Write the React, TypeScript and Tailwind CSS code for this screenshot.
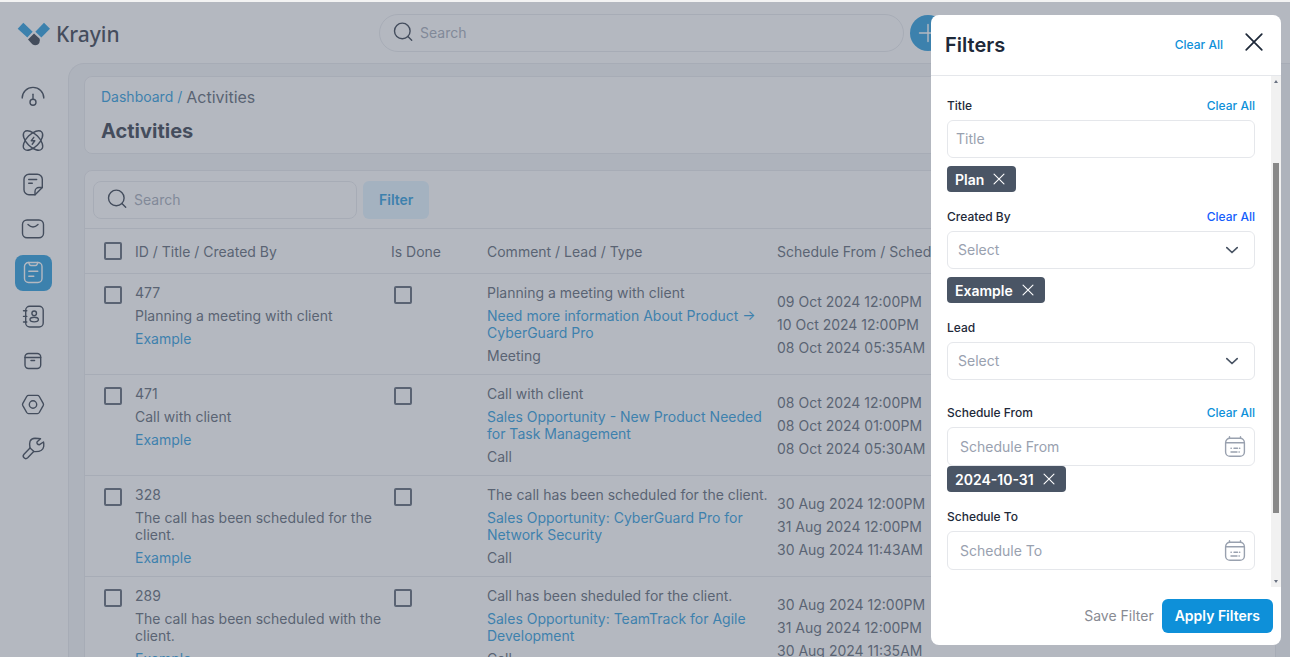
import React from "react";

const brandText = "text-[#0e90d9]";

type IconProps = { children: React.ReactNode; className?: string };

function Icon({ children, className = "size-6" }: IconProps) {
  return (
    <svg
      viewBox="0 0 24 24"
      fill="none"
      stroke="currentColor"
      strokeWidth="1.4"
      strokeLinecap="round"
      strokeLinejoin="round"
      aria-hidden="true"
      className={`shrink-0 ${className}`}
    >
      {children}
    </svg>
  );
}

function SearchIcon() {
  return (
    <Icon className="size-6">
      <circle cx="11.3" cy="9.9" r="7.8" />
      <path d="M16.900 15.500l3.800 3.800" />
    </Icon>
  );
}

function CloseIcon({ className }: { className: string }) {
  return (
    <Icon className={className}>
      <path d="M3.5 3.5l17 17M20.5 3.5l-17 17" strokeWidth="1.9" />
    </Icon>
  );
}

function CalendarIcon() {
  return (
    <Icon className="size-6">
      <path d="M7 3.300h10a4.400 4.400 0 0 1 4.400 4.400v9.200a4.400 4.400 0 0 1-4.400 4.400H7a4.400 4.400 0 0 1-4.400-4.400V7.700A4.400 4.400 0 0 1 7 3.300z" />
      <path d="M2.700 7.800h18.600M6.500 1.700v1.500M17.500 1.700v1.500M8 13.200h.3M11 13.200h3.500M16.500 13.200h.3M8 17h6M16 17h.3" />
    </Icon>
  );
}

const navItems = [
  {
    label: "Dashboard",
    icon: (
      <>
        <path d="M1.200 13C1.200 7 6 2.400 12 2.400S22.800 7 22.800 13" />
        <path d="M12 9.200v5" />
        <circle cx="12" cy="17.300" r="3" />
      </>
    ),
  },
  {
    label: "Leads",
    icon: (
      <>
        <ellipse cx="12" cy="11.500" rx="12.200" ry="6.300" transform="rotate(45 12 11.500)" />
        <ellipse cx="12" cy="11.500" rx="12.200" ry="6.300" transform="rotate(-45 12 11.500)" />
        <path d="M12.800 8.300l-2.600 3.500h3.600l-2.600 3.400" />
      </>
    ),
  },
  {
    label: "Quotes",
    icon: (
      <>
        <path d="M8 1.200h8.300a5 5 0 0 1 5 5v8.300l-7.200 7.200H8a5 5 0 0 1-5-5V6.200a5 5 0 0 1 5-5z" />
        <path d="M21.300 14.500H18a4 4 0 0 0-4 4v3.200" />
        <path d="M7.700 6.500h8M7.700 10.200h3.600" />
      </>
    ),
  },
  {
    label: "Mail",
    icon: (
      <>
        <rect x="1.500" y="3" width="21" height="17.800" rx="4.500" />
        <path d="M7 7.500c3.500 3.400 6.500 3.400 10 0" />
      </>
    ),
  },
  {
    label: "Activities",
    icon: (
      <>
        <rect x="3.500" y="1.500" width="17.500" height="20" rx="4" />
        <path d="M7.800 1.500c.3 2.200 1 3 2.200 3h4.500c1.200 0 1.900-.8 2.200-3M7.800 10.300h9M7.800 15.300h5" />
      </>
    ),
  },
  {
    label: "Contacts",
    icon: (
      <>
        <rect x="4.700" y="1.300" width="17.500" height="20.700" rx="4" />
        <path d="M2.500 5.800h3.300M2.500 11.400h3.300M2.500 17h3.300" />
        <circle cx="13.200" cy="8.300" r="2.300" />
        <ellipse cx="13.200" cy="14.600" rx="4.200" ry="2.300" />
      </>
    ),
  },
  {
    label: "Products",
    icon: (
      <>
        <rect x="4" y="4.500" width="15.700" height="15" rx="3.500" />
        <path d="M4 8.500h15.700M10 11.500h3.600" />
      </>
    ),
  },
  {
    label: "Configuration",
    icon: (
      <>
        <path d="M1.700 10.700l4-7.200c.5-.8 1-1.100 1.800-1.100h9c.8 0 1.300.3 1.800 1.100l4 7.200c.3.600.3 1 0 1.600l-4 7.200c-.5.800-1 1.100-1.800 1.100h-9c-.8 0-1.300-.3-1.800-1.100l-4-7.200c-.3-.6-.3-1 0-1.600z" />
        <circle cx="12" cy="11.500" r="3.700" />
      </>
    ),
  },
  {
    label: "Settings",
    icon: (
      <>
        <path d="M9 11C8 5.500 8.500 1.500 14 1.200c2 0 4 0 5.500.5l-3.300 3c-.8 1.500.2 3 2.300 3l4-2.700c.5 1.500.3 3 .2 4.500-.6 4-3.700 5.500-9.700 5.100z" />
        <path d="M9 11l-6 6.200c-2.300 2.500 1.200 6 3.700 3.600l6-6.200" />
      </>
    ),
  },
];

type Activity = {
  id: string;
  title: string;
  comment: string;
  lead: string;
  type: string;
  dates: string[];
};

const activities: Activity[] = [
  {
    id: "477",
    title: "Planning a meeting with client",
    comment: "Planning a meeting with client",
    lead: "Need more information About Product -> CyberGuard Pro",
    type: "Meeting",
    dates: ["09 Oct 2024 12:00PM", "10 Oct 2024 12:00PM", "08 Oct 2024 05:35AM"],
  },
  {
    id: "471",
    title: "Call with client",
    comment: "Call with client",
    lead: "Sales Opportunity - New Product Needed for Task Management",
    type: "Call",
    dates: ["08 Oct 2024 12:00PM", "08 Oct 2024 01:00PM", "08 Oct 2024 05:30AM"],
  },
  {
    id: "328",
    title: "The call has been scheduled for the client.",
    comment: "The call has been scheduled for the client.",
    lead: "Sales Opportunity: CyberGuard Pro for Network Security",
    type: "Call",
    dates: ["30 Aug 2024 12:00PM", "31 Aug 2024 12:00PM", "30 Aug 2024 11:43AM"],
  },
  {
    id: "289",
    title: "The call has been scheduled with the client.",
    comment: "Call has been sheduled for the client.",
    lead: "Sales Opportunity: TeamTrack for Agile Development",
    type: "Call",
    dates: ["30 Aug 2024 12:00PM", "31 Aug 2024 12:00PM", "30 Aug 2024 11:35AM"],
  },
];

function Checkbox({ label }: { label: string }) {
  return (
    <input
      type="checkbox"
      aria-label={label}
      className="block size-[18px] appearance-none rounded-[2px] border-2 border-gray-600"
    />
  );
}

function Header() {
  return (
    <header className="flex h-[61px] shrink-0 items-center justify-between px-4">
      <a href="#home" className="flex w-[103px] items-center gap-[5px] pt-0.5 pl-px text-gray-800">
        <svg viewBox="51 67 102 71" className="h-6 w-[34px] shrink-0" aria-hidden="true">
          <path d="M53 87L70 69L98 96L82 113Z" fill="#0e90d9" />
          <path d="M106 96L132 69L150 87L124 113Z" fill="#0e90d9" />
          <path d="M84 119L102 101L119 117Q121 128 114 134Q105 139 97 133Z" fill="#1f2937" />
        </svg>
        <span className="font-['Noto_Sans',sans-serif] text-[21px] leading-7 font-medium">Krayin</span>
      </a>
      <div className="flex items-center gap-1.5">
        <div className="flex h-[38px] w-[525px] items-center gap-[5px] rounded-full border border-gray-200 px-[11px]">
          <SearchIcon />
          <input
            type="search"
            aria-label="Search everything"
            placeholder="Search"
            className="min-w-0 flex-1 outline-none placeholder:text-gray-400"
          />
        </div>
        <button type="button" aria-label="Create" className="grid size-9 place-items-center rounded-full bg-[#0e90d9] text-white">
          <Icon>
            <path d="M12 3.500v17M3.500 12h17" />
          </Icon>
        </button>
      </div>
      <div className="flex w-[68px] items-center justify-end">
        <button type="button" aria-label="Account" className="size-9 rounded-full bg-pink-400" />
      </div>
    </header>
  );
}

function Sidebar() {
  return (
    <nav aria-label="Main" className="flex w-[68px] shrink-0 flex-col gap-2 px-[15px] pt-4 text-gray-800">
      {navItems.map((item) => (
        <a
          key={item.label}
          href={`#${item.label.toLowerCase()}`}
          aria-label={item.label}
          className={
            item.label === "Activities"
              ? "flex h-9 w-[37px] items-center rounded-lg bg-[#0e90d9] pl-1.5 text-white"
              : "flex h-9 w-[37px] items-center rounded-lg pl-1.5"
          }
        >
          <Icon>{item.icon}</Icon>
        </a>
      ))}
    </nav>
  );
}

function ActivityTable() {
  return (
    <table className="w-full table-fixed text-left text-gray-600">
      <colgroup>
        <col className="w-[50px]" />
        <col className="w-[256px]" />
        <col className="w-[96px]" />
        <col className="w-[290px]" />
        <col />
      </colgroup>
      <thead>
        <tr className="h-11 border-b border-gray-200">
          <th className="pl-[19px] font-normal">
            <Checkbox label="Select all activities" />
          </th>
          <th className="pt-0.5 font-normal">ID / Title / Created By</th>
          <th className="pt-0.5 font-normal">Is Done</th>
          <th className="pt-0.5 font-normal">Comment / Lead / Type</th>
          <th className="pt-0.5 font-normal">Schedule From / Schedule To / Created At</th>
        </tr>
      </thead>
      <tbody>
        {activities.map((a) => (
          <tr key={a.id} className="border-b border-gray-200 align-top leading-[17px]">
            <td className="py-3 pl-[19px]">
              <Checkbox label={`Select activity ${a.id}`} />
            </td>
            <td className="py-2.5 pr-2">
              <div className="flex flex-col gap-1.5">
                <p>{a.id}</p>
                <p>{a.title}</p>
                <a href="#user" className={brandText}>Example</a>
              </div>
            </td>
            <td className="py-3 pl-[3px]">
              <Checkbox label={`Activity ${a.id} is done`} />
            </td>
            <td className="py-2.5 pr-2">
              <div className="flex flex-col gap-1.5">
                <p>{a.comment}</p>
                <a href="#lead" className={brandText}>{a.lead}</a>
                <p>{a.type}</p>
              </div>
            </td>
            <td className="pt-0.5 align-middle">
              <div className="flex flex-col gap-1.5">
                {a.dates.map((d) => (
                  <p key={d}>{d}</p>
                ))}
              </div>
            </td>
          </tr>
        ))}
      </tbody>
    </table>
  );
}

function FieldHeader({ id, label, clear }: { id: string; label: string; clear?: string }) {
  return (
    <div className="mb-1 flex items-center justify-between text-xs leading-5 font-medium">
      <label htmlFor={id} className="text-gray-800">{label}</label>
      {clear && (
        <button type="button" className={clear}>Clear All</button>
      )}
    </div>
  );
}

function Chip({ children }: { children: string }) {
  return (
    <span className="flex h-[26px] w-fit items-center gap-2 rounded bg-gray-600 px-2 font-semibold text-white">
      <span className="pt-0.5">{children}</span>
      <button type="button" aria-label={`Remove ${children}`} className="pr-0.5">
        <CloseIcon className="size-3.5" />
      </button>
    </span>
  );
}

function SelectField({ id }: { id: string }) {
  return (
    <div className="grid items-center">
      <select
        id={id}
        defaultValue=""
        className="col-start-1 row-start-1 h-[38px] w-full appearance-none rounded-md border border-gray-200 bg-white px-2.5 text-gray-400"
      >
        <option value="">Select</option>
        <option value="example">Example</option>
      </select>
      <Icon className="pointer-events-none col-start-1 row-start-1 mr-[11px] size-6 justify-self-end text-gray-600">
        <path d="M6.800 9.600l5.200 4.900 5.200-4.900" strokeWidth="1.700" />
      </Icon>
    </div>
  );
}

function DateField({ id, placeholder }: { id: string; placeholder: string }) {
  return (
    <div className="flex h-[39px] items-center rounded-md border border-gray-200 pr-[7px] pl-3 text-gray-400">
      <input id={id} type="text" placeholder={placeholder} className="min-w-0 flex-1 outline-none placeholder:text-gray-400" />
      <CalendarIcon />
    </div>
  );
}

function FilterPanel() {
  return (
    <aside aria-label="Filters" className="flex w-[350px] flex-col overflow-hidden rounded-lg bg-white">
      <div className="flex h-[61px] shrink-0 items-center justify-between border-b border-gray-200 pr-4 pl-3.5">
        <h2 className="text-xl font-semibold text-gray-800">Filters</h2>
        <div className="flex items-center gap-5">
          <button type="button" className="text-xs font-medium text-[#0e90d9]">Clear All</button>
          <button type="button" aria-label="Close filters" className="pb-1.5 text-gray-800">
            <CloseIcon className="size-[22px]" />
          </button>
        </div>
      </div>
      <div className="flex min-h-0 flex-1">
        <form className="flex min-w-0 flex-1 flex-col gap-[15px] overflow-hidden px-4 pt-5">
          <div>
            <FieldHeader id="title" label="Title" clear="text-[#0e90d9]" />
            <input
              id="title"
              type="text"
              placeholder="Title"
              className="mb-2 block h-[38px] w-full rounded-md border border-gray-200 px-2 pb-0.5 placeholder:text-gray-400"
            />
            <Chip>Plan</Chip>
          </div>
          <div>
            <FieldHeader id="created-by" label="Created By" clear="text-blue-600" />
            <div className="mb-2">
              <SelectField id="created-by" />
            </div>
            <Chip>Example</Chip>
          </div>
          <div>
            <FieldHeader id="lead" label="Lead" />
            <div className="mb-2">
              <SelectField id="lead" />
            </div>
          </div>
          <div>
            <FieldHeader id="schedule-from" label="Schedule From" clear="text-[#0e90d9]" />
            <DateField id="schedule-from" placeholder="Schedule From" />
            <Chip>2024-10-31</Chip>
          </div>
          <div>
            <FieldHeader id="schedule-to" label="Schedule To" />
            <DateField id="schedule-to" placeholder="Schedule To" />
          </div>
        </form>
        <div aria-hidden="true" className="flex w-2.5 shrink-0 flex-col items-center bg-[#f1f1f1] py-1 text-gray-500">
          <svg viewBox="0 0 4 3" className="h-[3px] w-1 shrink-0"><path d="M0 3L2 0L4 3Z" fill="currentColor" /></svg>
          <div className="flex w-1.5 flex-1 flex-col">
            <div className="flex-[80]" />
            <div className="flex-[350] bg-[#888888]" />
            <div className="flex-[67]" />
          </div>
          <svg viewBox="0 0 4 3" className="h-[3px] w-1 shrink-0"><path d="M0 0L2 3L4 0Z" fill="currentColor" /></svg>
        </div>
      </div>
      <div className="flex shrink-0 items-center justify-end gap-2 py-3 pr-2">
        <button type="button" className="text-[#888b93]">Save Filter</button>
        <button type="button" className="h-[34px] rounded-md bg-[#0e90d9] px-[13px] font-semibold text-white">
          Apply Filters
        </button>
      </div>
    </aside>
  );
}

export default function App() {
  return (
    <div className="flex h-screen flex-col overflow-hidden bg-white font-[Inter,'Liberation_Sans',sans-serif] text-sm text-gray-800">
      <div className="h-0.5 shrink-0 bg-[#f3f3f3]" />
      <div className="relative flex min-h-0 flex-1 flex-col">
        <Header />
        <div className="flex min-h-0 flex-1">
          <Sidebar />
          <main className="flex min-w-0 flex-1 flex-col gap-4 overflow-hidden rounded-tl-2xl border-t border-l border-gray-200 bg-gray-100 pt-3 pr-3.5 pl-[15px]">
            <section className="shrink-0 rounded-lg border border-gray-200 bg-white px-4 pt-2 pb-2">
              <nav aria-label="Breadcrumb" className="flex items-center gap-1 leading-6">
                <a href="#dashboard" className={brandText}>Dashboard</a>
                <span className={brandText}>/</span>
                <span className="text-base text-gray-600">Activities</span>
              </nav>
              <h1 className="mt-2 text-xl font-bold text-gray-800">Activities</h1>
            </section>
            <section className="shrink-0 rounded-lg border border-gray-200 bg-white">
              <div className="flex h-[58px] items-center gap-1.5 border-b border-gray-200 px-2">
                <div className="flex h-[38px] w-[264px] items-center gap-[5px] rounded-lg border border-gray-200 px-[11px]">
                  <SearchIcon />
                  <input
                    type="search"
                    aria-label="Search activities"
                    placeholder="Search"
                    className="min-w-0 flex-1 outline-none placeholder:text-gray-400"
                  />
                </div>
                <button type="button" className="h-[38px] rounded-md bg-sky-100 px-4 font-semibold text-[#0e90d9]">
                  Filter
                </button>
              </div>
              <ActivityTable />
            </section>
          </main>
        </div>
        <div className="absolute inset-0 flex justify-end bg-gray-500/50 pt-[13px] pr-[9px] pb-3">
          <FilterPanel />
        </div>
      </div>
    </div>
  );
}
